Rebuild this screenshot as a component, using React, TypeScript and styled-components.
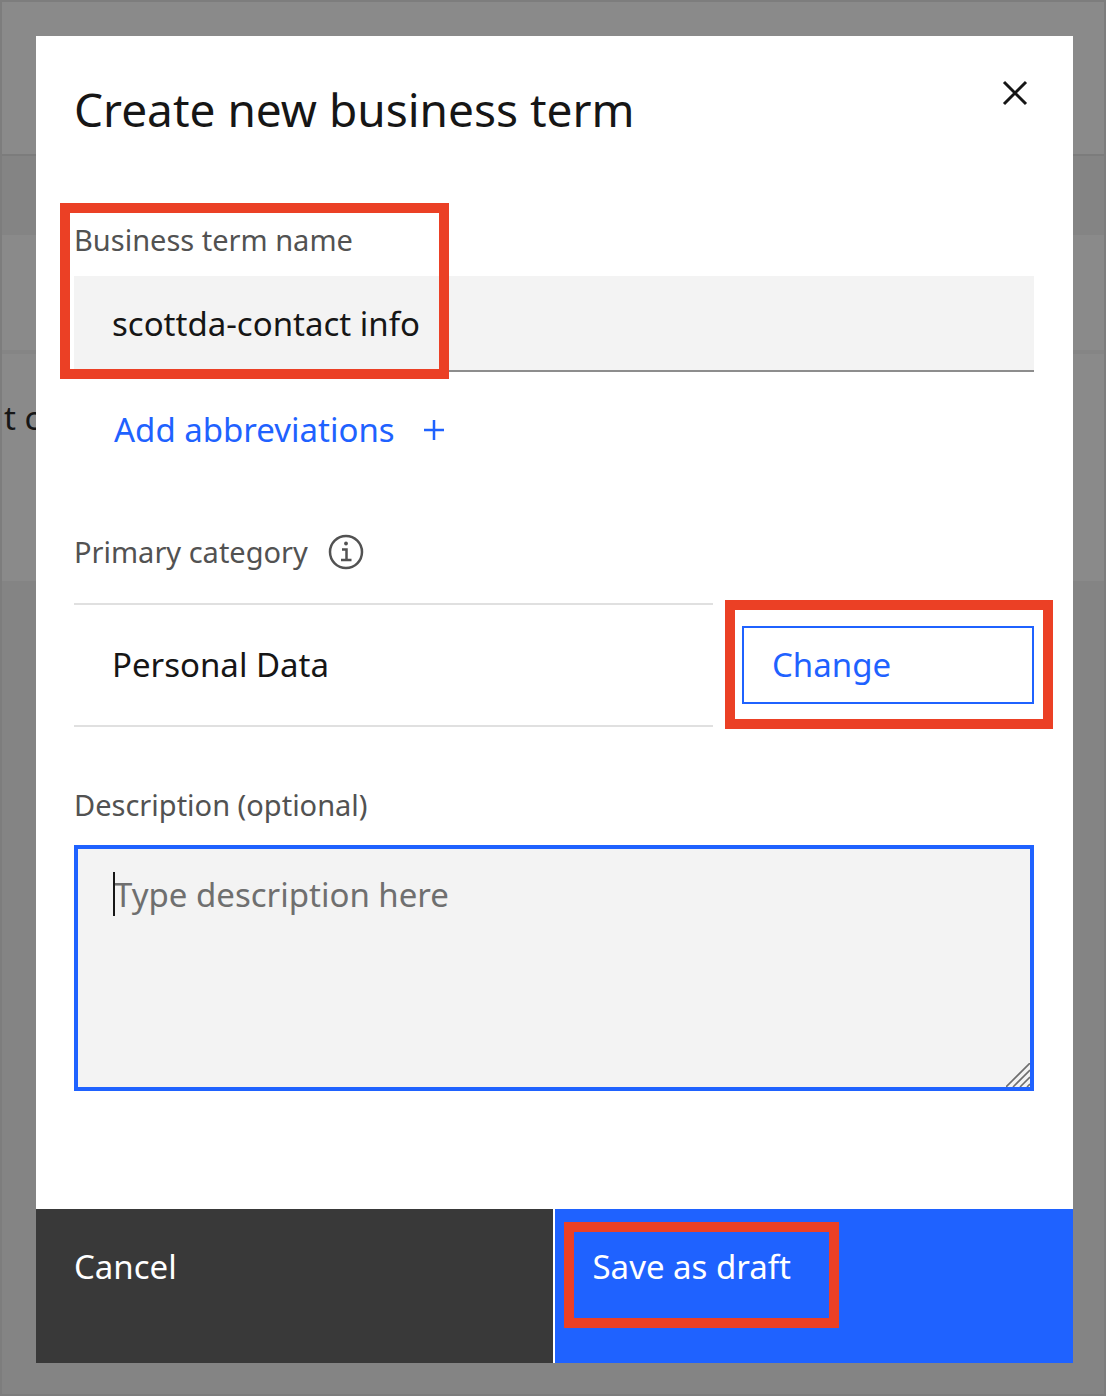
import React, { useState } from "react";
import styled, { createGlobalStyle, css } from "styled-components";

const color = {
  text: "#161616",
  muted: "#525252",
  placeholder: "#6f6f6f",
  blue: "#1f62ff",
  field: "#f3f3f3",
  rule: "#e0e0e0",
  callout: "#eb4025",
};

const GlobalStyle = createGlobalStyle`
  *, *::before, *::after { box-sizing: border-box; }
  body { margin: 0; background: #848484; }
  body, button, input, textarea {
    font-family: "Noto Sans", "Open Sans", sans-serif;
    color: ${color.text};
  }
`;

const bodyText = css`
  font-size: 33px;
  line-height: 44px;
`;

const plainButton = css`
  margin: 0;
  padding: 0;
  border: 0;
  background: none;
  cursor: pointer;
  text-align: left;
`;

const Page = styled.div`
  display: grid;
  grid-template-columns: minmax(0, 1fr);
  min-height: 100vh;
`;

const Backdrop = styled.div`
  grid-area: 1 / 1;
  display: flex;
  flex-direction: column;
  overflow: hidden;
  background: #848484;
  border: 2px solid #7d7d7d;
`;

const Band = styled.div<{ $height: number; $light?: boolean; $line?: string }>`
  flex: none;
  display: flex;
  height: ${(p) => p.$height}px;
  background: ${(p) => (p.$light ? "#8a8a8a" : "#848484")};
  border-bottom: ${(p) => p.$line ?? "0"};
`;

const RowText = styled.span`
  ${bodyText}
  padding: 42px 2px;
  white-space: nowrap;
`;

const Overlay = styled.div`
  grid-area: 1 / 1;
  z-index: 1;
  display: flex;
  padding: 36px 33px 33px 36px;
`;

const Dialog = styled.section`
  flex: 1;
  min-width: 0;
  display: flex;
  flex-direction: column;
  background: #fff;
`;

const Header = styled.header`
  display: flex;
  justify-content: space-between;
  align-items: flex-start;
  padding: 35px 36px 0 38px;
`;

const Title = styled.h1`
  margin: 6px 0 0;
  font-size: 46px;
  line-height: 64px;
  font-weight: 400;
`;

const CloseButton = styled.button`
  ${plainButton}
  display: flex;
  align-items: center;
  justify-content: center;
  width: 44px;
  height: 44px;
`;

const Body = styled.div`
  flex: 1;
  display: flex;
  flex-direction: column;
  padding: 81px 39px 118px 38px;
`;

const Field = styled.div<{ $gap: number }>`
  position: relative;
  display: flex;
  flex-direction: column;
  gap: ${(p) => p.$gap}px;
`;

const Label = styled.label`
  font-size: 29px;
  line-height: 36px;
  color: ${color.muted};
`;

const TextInput = styled.input`
  width: 100%;
  height: 96px;
  padding: 0 38px;
  border: 0;
  border-bottom: 2px solid #8d8d8d;
  border-radius: 0;
  outline: 0;
  background: ${color.field};
  ${bodyText}
`;

const AddButton = styled.button`
  ${plainButton}
  ${bodyText}
  align-self: flex-start;
  display: flex;
  align-items: center;
  gap: 28px;
  margin: 36px 0 82px;
  padding-left: 40px;
  color: ${color.blue};
`;

const CategoryLabel = styled.div`
  display: flex;
  align-items: center;
  gap: 20px;
  margin-bottom: 33px;
  font-size: 29px;
  line-height: 36px;
  color: ${color.muted};
`;

const InfoButton = styled.button`
  ${plainButton}
  display: flex;
`;

const CategoryRow = styled.div`
  display: grid;
  grid-template-columns: minmax(0, 1fr) 292px;
  align-items: center;
  gap: 29px;
  margin-bottom: 60px;
`;

const CategoryValue = styled.div`
  ${bodyText}
  padding: 38px;
  border: solid ${color.rule};
  border-width: 2px 0;
`;

const ChangeSlot = styled.div`
  position: relative;
`;

const ChangeButton = styled.button`
  ${plainButton}
  ${bodyText}
  display: block;
  width: 100%;
  height: 78px;
  padding: 0 28px;
  border: 2px solid ${color.blue};
  color: ${color.blue};
`;

const TextAreaFrame = styled.div`
  position: relative;
  display: flex;
`;

const TextArea = styled.textarea`
  width: 100%;
  height: 246px;
  padding: 24px 36px;
  border: 4px solid ${color.blue};
  border-radius: 0;
  outline: 0;
  resize: none;
  background: ${color.field};
  ${bodyText}
  &::placeholder { color: ${color.placeholder}; opacity: 1; }
`;

const Caret = styled.span`
  position: absolute;
  top: 27px;
  left: 39px;
  width: 2px;
  height: 44px;
  background: ${color.text};
`;

const Grip = styled.svg`
  position: absolute;
  right: 4px;
  bottom: 4px;
  pointer-events: none;
`;

const Footer = styled.footer`
  display: grid;
  grid-template-columns: minmax(0, 1fr) 50%;
`;

const FooterButton = styled.button<{ $primary?: boolean }>`
  ${plainButton}
  ${bodyText}
  position: relative;
  display: flex;
  align-items: flex-start;
  height: 154px;
  padding: 36px 38px;
  color: #fff;
  background: ${(p) => (p.$primary ? color.blue : "#393939")};
  border-right: ${(p) => (p.$primary ? 0 : 2)}px solid #fff;
`;

const Callout = styled.span<{ $inset: string; $width?: number }>`
  position: absolute;
  inset: ${(p) => p.$inset};
  ${(p) => p.$width && `width: ${p.$width}px;`}
  border: 10px solid ${color.callout};
  pointer-events: none;
`;

export default function App() {
  const [name, setName] = useState("scottda-contact info");
  const [description, setDescription] = useState("");

  return (
    <>
      <GlobalStyle />
      <Page>
        <Backdrop>
          <Band $height={154} $light $line="2px solid #7c7c7c" />
          <Band $height={79} />
          <Band $height={119} $light $line="4px solid #858585" />
          <Band $height={227} $light>
            <RowText>t c</RowText>
          </Band>
        </Backdrop>
        <Overlay>
          <Dialog role="dialog" aria-labelledby="dialog-title">
            <Header>
              <Title id="dialog-title">Create new business term</Title>
              <CloseButton type="button" aria-label="Close">
                <svg width="26" height="26" viewBox="0 0 26 26" fill="none" stroke={color.text} strokeWidth="3">
                  <path d="M2 2 24 24M24 2 2 24" />
                </svg>
              </CloseButton>
            </Header>
            <Body>
              <Field $gap={18}>
                <Label htmlFor="term-name">Business term name</Label>
                <TextInput id="term-name" value={name} onChange={(e) => setName(e.target.value)} />
                <Callout $inset="-19px auto -7px -14px" $width={389} />
              </Field>
              <AddButton type="button">
                Add abbreviations
                <svg width="22" height="22" viewBox="0 0 22 22" fill="none" stroke="currentColor" strokeWidth="2.5">
                  <path d="M11 1V21M1 11H21" />
                </svg>
              </AddButton>
              <CategoryLabel>
                Primary category
                <InfoButton type="button" aria-label="About primary category">
                  <svg width="36" height="36" viewBox="0 0 36 36" fill="none" stroke={color.muted} strokeWidth="2.5">
                    <circle cx="18" cy="18" r="16" />
                    <path d="M14 15.5H18.5V26M13 26H23.5" />
                    <circle cx="18" cy="9.5" r="1.9" fill={color.muted} stroke="none" />
                  </svg>
                </InfoButton>
              </CategoryLabel>
              <CategoryRow>
                <CategoryValue>Personal Data</CategoryValue>
                <ChangeSlot>
                  <ChangeButton type="button">Change</ChangeButton>
                  <Callout $inset="-26px -19px -25px -17px" />
                </ChangeSlot>
              </CategoryRow>
              <Field $gap={22}>
                <Label htmlFor="description">Description (optional)</Label>
                <TextAreaFrame>
                  <TextArea
                    id="description"
                    placeholder="Type description here"
                    value={description}
                    onChange={(e) => setDescription(e.target.value)}
                  />
                  {description === "" && <Caret />}
                  <Grip width="24" height="24" viewBox="0 0 24 24" stroke={color.placeholder} strokeWidth="1.6">
                    <path d="M0 24 24 0M7 24 24 7M14 24 24 14M21 24 24 21" />
                  </Grip>
                </TextAreaFrame>
              </Field>
            </Body>
            <Footer>
              <FooterButton type="button">Cancel</FooterButton>
              <FooterButton type="button" $primary>
                Save as draft
                <Callout $inset="13px auto 35px 9px" $width={275} />
              </FooterButton>
            </Footer>
          </Dialog>
        </Overlay>
      </Page>
    </>
  );
}
